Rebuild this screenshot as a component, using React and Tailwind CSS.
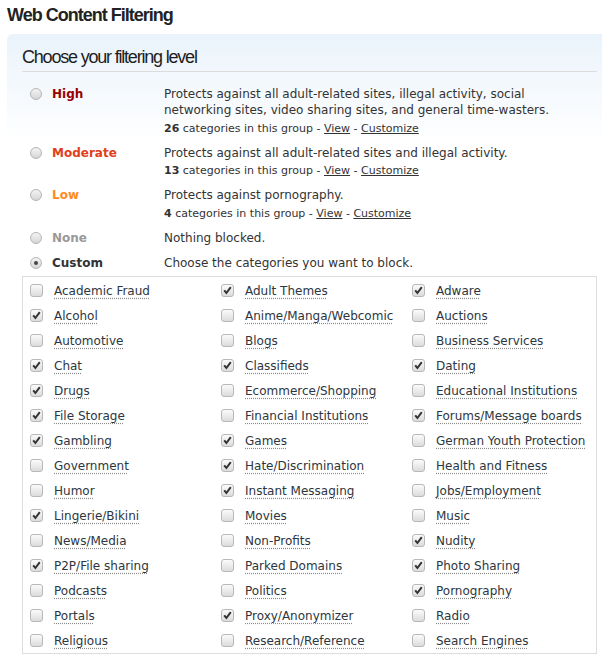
import React from 'react';

const levels = [
  {
    name: 'High',
    color: 'text-[#990000]',
    lines: ['Protects against all adult-related sites, illegal activity, social', 'networking sites, video sharing sites, and general time-wasters.'],
    count: 26,
  },
  {
    name: 'Moderate',
    color: 'text-[#e0401c]',
    lines: ['Protects against all adult-related sites and illegal activity.'],
    count: 13,
  },
  {
    name: 'Low',
    color: 'text-[#ff8a1e]',
    lines: ['Protects against pornography.'],
    count: 4,
  },
  { name: 'None', color: 'text-[#999999]', lines: ['Nothing blocked.'] },
  { name: 'Custom', color: 'text-[#333333]', lines: ['Choose the categories you want to block.'], selected: true },
];

const categories = [
  ['Academic Fraud', false], ['Adult Themes', true], ['Adware', true],
  ['Alcohol', true], ['Anime/Manga/Webcomic', false], ['Auctions', false],
  ['Automotive', false], ['Blogs', false], ['Business Services', false],
  ['Chat', true], ['Classifieds', true], ['Dating', true],
  ['Drugs', true], ['Ecommerce/Shopping', false], ['Educational Institutions', false],
  ['File Storage', true], ['Financial Institutions', false], ['Forums/Message boards', true],
  ['Gambling', true], ['Games', true], ['German Youth Protection', false],
  ['Government', false], ['Hate/Discrimination', true], ['Health and Fitness', false],
  ['Humor', false], ['Instant Messaging', true], ['Jobs/Employment', false],
  ['Lingerie/Bikini', true], ['Movies', false], ['Music', false],
  ['News/Media', false], ['Non-Profits', false], ['Nudity', true],
  ['P2P/File sharing', true], ['Parked Domains', false], ['Photo Sharing', true],
  ['Podcasts', false], ['Politics', false], ['Pornography', true],
  ['Portals', false], ['Proxy/Anonymizer', true], ['Radio', false],
  ['Religious', false], ['Research/Reference', false], ['Search Engines', false],
];

const Radio = ({ selected }) => (
  <span className="w-[12px] h-[12px] rounded-full border border-[#b5b5b5] bg-gradient-to-b from-[#f4f4f4] to-[#d6d6d6] flex items-center justify-center shrink-0">
    {selected && <span className="w-[4px] h-[4px] rounded-full bg-[#444]" />}
  </span>
);

const Checkbox = ({ checked }) => (
  <span className="w-[13px] h-[13px] rounded-[3px] border border-[#b8b8b8] bg-gradient-to-b from-[#fbfbfb] to-[#dcdcdc] flex items-center justify-center shrink-0">
    {checked && (
      <svg width="9" height="9" viewBox="0 0 9 9">
        <path d="M1.2 4.4 L3.4 7 L7.8 1.2" fill="none" stroke="#333" strokeWidth="2" />
      </svg>
    )}
  </span>
);

export default function App() {
  return (
    <div className="w-[602px] h-[654px] overflow-hidden bg-white text-[#333] font-['DejaVu_Sans',Verdana,sans-serif]">
      <h1 className="pl-[7px] pt-[4px] h-[34px] text-[18px] leading-[22px] font-bold tracking-[-1px] text-[#222] font-['Liberation_Sans',Arial,sans-serif]">
        Web Content Filtering
      </h1>

      <div className="ml-[7px] w-[605px] rounded-tl-[6px] bg-gradient-to-b from-[#eaf3fb] to-white to-[110px] px-[15px] pt-[12px]">
        <h2 className="text-[18px] leading-[22px] tracking-[-1.2px] text-[#1e1e1e] font-['Liberation_Sans',Arial,sans-serif] pb-[3px] border-b border-[#dcdcdc]">
          Choose your filtering level
        </h2>

        <div className="pt-[14px]">
          {levels.map((lv, i) => (
            <div key={lv.name} className={`flex ${i === 0 ? '' : lv.name === 'Custom' ? 'mt-[9px]' : 'mt-[8px]'}`}>
              <div className="flex items-center h-[16px] pl-[8px] w-[142px] shrink-0">
                <Radio selected={lv.selected} />
                <span className={`ml-[10px] text-[12px] leading-[16px] font-bold ${lv.color}`}>{lv.name}</span>
              </div>
              <div className="text-[12px] leading-[16px]">
                {lv.lines.map((l) => (
                  <div key={l}>{l}</div>
                ))}
                {lv.count !== undefined && (
                  <div className="text-[11px] leading-[16px] mt-[2.5px]">
                    <b>{lv.count}</b> categories in this group - <span className="underline">View</span> -{' '}
                    <span className="underline">Customize</span>
                  </div>
                )}
              </div>
            </div>
          ))}
        </div>

        <div className="mt-[5.5px] border border-[#dddddd] pt-[1px] grid grid-cols-3">
          {categories.map(([name, checked]) => (
            <div key={name} className="flex items-center h-[25px] pl-[7px]">
              <Checkbox checked={checked} />
              <span className="ml-[11px] text-[12px] leading-[16px] text-[#2d3640] underline decoration-dotted decoration-[#8a8a8a] underline-offset-[3px] whitespace-nowrap">
                {name}
              </span>
            </div>
          ))}
        </div>
      </div>
    </div>
  );
}
